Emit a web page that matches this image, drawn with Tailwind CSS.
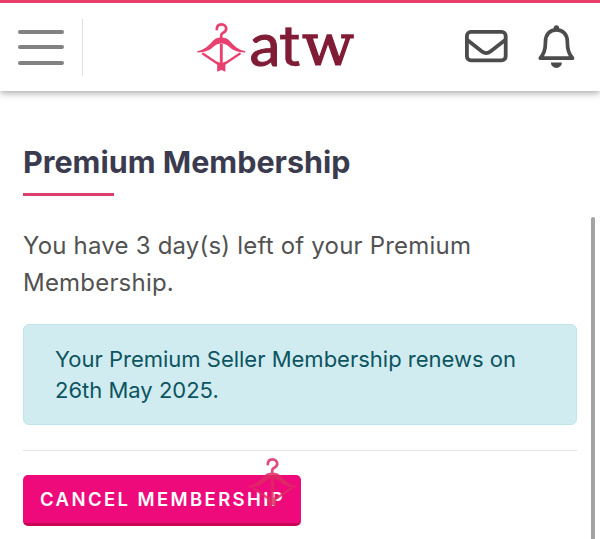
<!DOCTYPE html>
<html lang="en">
<head>
    <meta charset="UTF-8">
    <meta name="viewport" content="width=device-width, initial-scale=1.0">
    <title>Premium Membership</title>
    <script src="https://cdn.jsdelivr.net/npm/@tailwindcss/browser@4"></script>
</head>
<body class="relative h-[539px] overflow-hidden bg-white font-['Inter',sans-serif]">

    <!-- Header -->
    <header class="flex h-[91px] items-start border-t-3 border-[#e9406b] bg-white pl-[18px] pr-[25px] shadow-[0_2px_7px_rgba(0,0,0,0.35)]">
        <button class="mt-[27px] flex w-[46px] flex-col gap-[11.3px]" aria-label="Menu">
            <span class="h-1 w-full rounded-full bg-[#828282]"></span>
            <span class="h-1 w-full rounded-full bg-[#828282]"></span>
            <span class="h-1 w-full rounded-full bg-[#828282]"></span>
        </button>
        <div class="ml-[18px] mt-4 h-[57px] w-px bg-[#e2e2e2]"></div>

        <!-- Logo -->
        <svg class="ml-[112px] -mt-[3px] overflow-visible text-[#e8416f]" width="165" height="88" viewBox="195 0 165 88" aria-label="atw">
            <g id="hanger" fill="none" stroke="currentColor" stroke-linecap="round" stroke-linejoin="round">
                <path d="M216.8 29.2C216.9 25.7 219 24.4 221.4 24.4C224.4 24.4 226.2 26.3 226.2 28.8C226.2 31.4 224.3 32.4 222.5 33.3C221.4 33.9 221.2 34.6 221.2 36V39" stroke-width="2.7"/>
                <path d="M197.3 51.2C204.5 49.5 208.6 45.6 211.8 41.9C214.8 38.4 218 37.6 221.3 37.6S227.8 38.4 230.8 41.9C234 45.6 238.1 49.5 245.3 51.2V52.4C238.3 52.6 232.4 50.4 228.9 46.6C226.6 44.2 224.3 43.4 221.3 43.4S216 44.2 213.7 46.6C210.2 50.4 204.3 52.6 197.3 52.4Z" fill="currentColor" stroke="none"/>
                <path d="M203 53.8L217.5 63.5M239.7 53.8L225.1 63.5" stroke-width="2.3"/>
                <path d="M221.3 44V64" stroke-width="2.9" stroke-linecap="butt"/>
                <path d="M217.2 61.5L221.3 63.5L225.4 61.5V71.8L221.3 70L217.2 71.8Z" fill="currentColor" stroke="none"/>
            </g>
            <g fill="#801c36" stroke="#801c36">
                <text x="249.5" y="65.8" font-family="Lato" font-size="60" font-weight="400" stroke-width="1" textLength="31" lengthAdjust="spacingAndGlyphs">a</text>
                <text x="279.5" y="65.8" font-family="Inter" font-size="57" font-weight="400" stroke-width="0.3" textLength="21.5" lengthAdjust="spacingAndGlyphs">t</text>
                <text x="302" y="65.4" font-family="DejaVu Serif" font-size="57" stroke-width="1.2" textLength="52" lengthAdjust="spacingAndGlyphs">w</text>
            </g>
        </svg>

        <!-- Mail and notifications -->
        <svg class="ml-auto mt-[26px]" width="44" height="34" viewBox="0 0 44 34" fill="none" stroke="#4c4c4c" stroke-width="3.8" stroke-linejoin="round">
            <rect x="2.9" y="2.9" width="38.8" height="28.4" rx="4"/>
            <path d="M3 10.7L18 22.5C20.8 24.6 23.6 24.6 26.4 22.5L41.5 10.7"/>
        </svg>
        <svg class="ml-[29px] mt-[21px]" width="38" height="46" viewBox="0 0 38 46">
            <path d="M19.4 5.9C12.3 5.9 8.5 11 8.5 17.5C8.5 27 6.3 30 3.3 34.2H35.5C32.5 30 30.3 27 30.3 17.5C30.3 11 26.5 5.9 19.4 5.9Z" fill="none" stroke="#4c4c4c" stroke-width="3.7" stroke-linejoin="round"/>
            <path d="M16.7 6V3.9A2.7 2.7 0 0 1 22.1 3.9V6ZM13.9 38.4H24.9A5.5 5.5 0 0 1 13.9 38.4Z" fill="#4c4c4c"/>
        </svg>
    </header>

    <!-- Membership -->
    <main class="px-[23px] pt-[51px]">
        <h1 class="whitespace-nowrap text-[30.5px] leading-[39px] font-bold text-[#3b3b4f]">Premium Membership</h1>
        <div class="mt-[12px] h-[3px] w-[91px] bg-[#dc416d]"></div>

        <p class="mt-[31px] text-[24px] leading-[37px] tracking-[0.2px] text-[#525252]">
            <span class="whitespace-nowrap">You have 3 day(s) left of your Premium</span><br>Membership.
        </p>

        <div class="mt-[23px] h-[101px] rounded-md border border-[#bee5eb] bg-[#d1ecf1] pl-[31px] pt-[19px] text-[22px] leading-[31px] text-[#0c5460]">
            <span class="whitespace-nowrap">Your Premium Seller Membership renews on</span><br>26th May 2025.
        </div>

        <hr class="mt-[25px] border-t-[1.5px] border-[#e5e5e5]">

        <button class="mt-[24px] flex h-[51px] w-[278px] items-center rounded-[5px] border-b-3 border-[#c80552] bg-[#ef0a7b] pl-[17px] pt-[2px] text-[18.5px] font-semibold tracking-[2.4px] whitespace-nowrap text-white">CANCEL MEMBERSHIP</button>
    </main>

    <!-- Loading indicator floating over the page -->
    <svg class="absolute left-[246px] top-[455px] text-[#de2c63] opacity-85" width="55" height="56" viewBox="195 20 55 56">
        <use href="#hanger"/>
    </svg>

    <!-- Scrollbar -->
    <div class="absolute top-[217px] right-[5px] h-[340px] w-1 rounded-full bg-[#a3a3a3]"></div>

</body>
</html>
